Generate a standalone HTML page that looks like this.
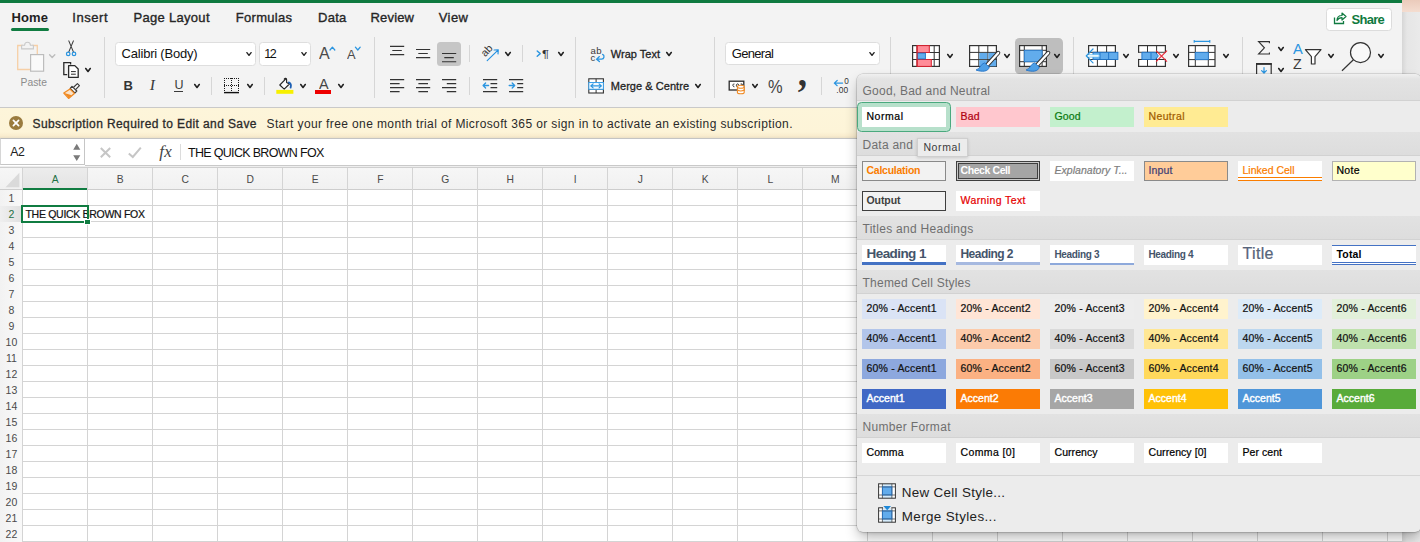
<!DOCTYPE html>
<html lang="en"><head><meta charset="utf-8"><title>Excel</title><style>
html,body{margin:0;padding:0}
body{width:1420px;height:542px;overflow:hidden;position:relative;background:#ececec;font-family:"Liberation Sans",sans-serif}
.r{position:absolute;box-sizing:border-box;display:block}
.t{position:absolute;white-space:pre;display:block}
</style></head>
<body>
<div class="r" style="left:1402px;top:0px;width:18px;height:542px;background:linear-gradient(to right,#d6d6d6 0,#e6e6e6 5px,#eaeaea 100%);"></div>
<div class="r" style="left:1402px;top:0px;width:18px;height:12px;background:linear-gradient(#ebcbbb,#f4ddd0);"></div>
<div class="r" style="left:0px;top:0px;width:1402px;height:107px;background:#f3f3f3;"></div>
<div class="r" style="left:0px;top:0px;width:1402px;height:3px;background:#0f7a40;"></div>
<span class="t" style="left:11.50px;top:8px;font:normal bold 13px/20px 'Liberation Sans',sans-serif;color:#1f1f1f;letter-spacing:0.127px;">Home</span>
<div class="r" style="left:11px;top:28px;width:38px;height:3px;background:#107c41;border-radius:1.5px"></div>
<span class="t" style="left:72.25px;top:8px;font:normal normal 13px/20px 'Liberation Sans',sans-serif;color:#262626;letter-spacing:0.547px;-webkit-text-stroke:0.35px #262626;">Insert</span>
<span class="t" style="left:133.50px;top:8px;font:normal normal 13px/20px 'Liberation Sans',sans-serif;color:#262626;letter-spacing:0.299px;-webkit-text-stroke:0.35px #262626;">Page Layout</span>
<span class="t" style="left:235.75px;top:8px;font:normal normal 13px/20px 'Liberation Sans',sans-serif;color:#262626;letter-spacing:0.296px;-webkit-text-stroke:0.35px #262626;">Formulas</span>
<span class="t" style="left:318.00px;top:8px;font:normal normal 13px/20px 'Liberation Sans',sans-serif;color:#262626;letter-spacing:0.263px;-webkit-text-stroke:0.35px #262626;">Data</span>
<span class="t" style="left:370.50px;top:8px;font:normal normal 13px/20px 'Liberation Sans',sans-serif;color:#262626;letter-spacing:0.175px;-webkit-text-stroke:0.35px #262626;">Review</span>
<span class="t" style="left:438.75px;top:8px;font:normal normal 13px/20px 'Liberation Sans',sans-serif;color:#262626;letter-spacing:0.435px;-webkit-text-stroke:0.35px #262626;">View</span>
<div class="r" style="left:1325.5px;top:7.5px;width:66px;height:23px;background:#fff;border:1px solid #dcdcdc;border-radius:3.5px"></div>
<span class="t" style="left:1351.60px;top:10px;font:normal bold 13px/20px 'Liberation Sans',sans-serif;color:#0f7a40;letter-spacing:-0.733px;">Share</span>
<svg class="r" style="left:1333px;top:11px;" width="14" height="14" viewBox="0 0 14 14"><path d="M1.5 6.5 V12.5 H10.5 V10" fill="none" stroke="#0f7a40" stroke-width="1.3"/><path d="M4 9.5 C4 6 6.5 4.5 9 4.5 V2 L13 5.5 L9 9 V6.6 C7 6.6 5.2 7.3 4 9.5 Z" fill="none" stroke="#0f7a40" stroke-width="1.2" stroke-linejoin="round"/></svg>
<div class="r" style="left:0px;top:107px;width:1402px;height:31px;background:linear-gradient(#fdf5da 0,#fdf4d8 80%,#f9ecce 93%,#ebe0c6 100%);border-top:1px solid #c9c9c9"></div>
<svg class="r" style="left:9px;top:116px;" width="14" height="14" viewBox="0 0 14 14"><circle cx="7" cy="7" r="7" fill="#9a7b3e"/><line x1="4.4" y1="4.4" x2="9.6" y2="9.6" stroke="#fff" stroke-width="1.7" stroke-linecap="round"/><line x1="9.6" y1="4.4" x2="4.4" y2="9.6" stroke="#fff" stroke-width="1.7" stroke-linecap="round"/></svg>
<span class="t" style="left:32.50px;top:114px;font:normal normal 12px/20px 'Liberation Sans',sans-serif;color:#2a2a2a;letter-spacing:0.393px;-webkit-text-stroke:0.3px #2a2a2a;">Subscription Required to Edit and Save</span>
<span class="t" style="left:266.50px;top:114px;font:normal normal 12px/20px 'Liberation Sans',sans-serif;color:#2a2a2a;letter-spacing:0.386px;">Start your free one month trial of Microsoft 365 or sign in to activate an existing subscription.</span>
<div class="r" style="left:0px;top:138px;width:1402px;height:30px;background:#fff;border-top:1px solid #c4c4c4"></div>
<div class="r" style="left:0px;top:138px;width:85px;height:26.5px;background:#fff;border-right:1px solid #c6c6c6;border-bottom:1px solid #c6c6c6;border-left:1px solid #d6d6d6;border-top:1px solid #bdbdbd"></div>
<div class="r" style="left:85px;top:165px;width:1317px;height:1px;background:#c9c9c9;"></div>
<div class="r" style="left:0px;top:166px;width:1402px;height:1px;background:#eee;"></div>
<div class="r" style="left:0px;top:167px;width:1402px;height:1px;background:#cfcfcf;"></div>
<span class="t" style="left:10.30px;top:142px;font:normal normal 12.3px/20px 'Liberation Sans',sans-serif;color:#222;letter-spacing:-0.545px;">A2</span>
<svg class="r" style="left:72px;top:142px;" width="10" height="21" viewBox="0 0 10 21"><path d="M4.75 1.7 L8.3 7.7 H1.2 Z M4.75 19 L8.3 13.3 H1.2 Z" fill="#7a7a7a"/></svg>
<svg class="r" style="left:99px;top:146px;" width="13" height="13" viewBox="0 0 13 13"><path d="M1.8 2 L11.2 11.2 M11.2 2 L1.8 11.2" stroke="#c6c6c6" stroke-width="2" fill="none"/></svg>
<svg class="r" style="left:127px;top:146px;" width="16" height="13" viewBox="0 0 16 13"><path d="M1.8 7.4 L5.8 11 L13.8 1.6" stroke="#c6c6c6" stroke-width="2" fill="none"/></svg>
<span class="t" style="left:159.30px;top:142px;font:italic normal 17px/20px 'Liberation Serif',serif;color:#444;letter-spacing:0.232px;">fx</span>
<div class="r" style="left:180px;top:144px;width:1px;height:16px;background:#dcdcdc;"></div>
<span class="t" style="left:188.00px;top:143px;font:normal normal 12.5px/20px 'Liberation Sans',sans-serif;color:#111;letter-spacing:-0.684px;">THE QUICK BROWN FOX</span>
<div class="r" style="left:0px;top:168px;width:1402px;height:22px;background:linear-gradient(#f6f6f6,#f1f1f1);border-bottom:1px solid #cdcdcd"></div>
<div class="r" style="left:0px;top:190px;width:22px;height:352px;background:linear-gradient(to right,#f2f2f2,#f9f9f9);"></div>
<div class="r" style="left:22px;top:190px;width:1380px;height:352px;background:#fff;"></div>
<div class="r" style="left:22px;top:205px;width:1380px;height:1px;background:#d4d4d4"></div><div class="r" style="left:22px;top:221px;width:1380px;height:1px;background:#d4d4d4"></div><div class="r" style="left:22px;top:237px;width:1380px;height:1px;background:#d4d4d4"></div><div class="r" style="left:22px;top:253px;width:1380px;height:1px;background:#d4d4d4"></div><div class="r" style="left:22px;top:269px;width:1380px;height:1px;background:#d4d4d4"></div><div class="r" style="left:22px;top:285px;width:1380px;height:1px;background:#d4d4d4"></div><div class="r" style="left:22px;top:301px;width:1380px;height:1px;background:#d4d4d4"></div><div class="r" style="left:22px;top:317px;width:1380px;height:1px;background:#d4d4d4"></div><div class="r" style="left:22px;top:333px;width:1380px;height:1px;background:#d4d4d4"></div><div class="r" style="left:22px;top:349px;width:1380px;height:1px;background:#d4d4d4"></div><div class="r" style="left:22px;top:365px;width:1380px;height:1px;background:#d4d4d4"></div><div class="r" style="left:22px;top:381px;width:1380px;height:1px;background:#d4d4d4"></div><div class="r" style="left:22px;top:397px;width:1380px;height:1px;background:#d4d4d4"></div><div class="r" style="left:22px;top:413px;width:1380px;height:1px;background:#d4d4d4"></div><div class="r" style="left:22px;top:429px;width:1380px;height:1px;background:#d4d4d4"></div><div class="r" style="left:22px;top:445px;width:1380px;height:1px;background:#d4d4d4"></div><div class="r" style="left:22px;top:461px;width:1380px;height:1px;background:#d4d4d4"></div><div class="r" style="left:22px;top:477px;width:1380px;height:1px;background:#d4d4d4"></div><div class="r" style="left:22px;top:493px;width:1380px;height:1px;background:#d4d4d4"></div><div class="r" style="left:22px;top:509px;width:1380px;height:1px;background:#d4d4d4"></div><div class="r" style="left:22px;top:525px;width:1380px;height:1px;background:#d4d4d4"></div><div class="r" style="left:22px;top:541px;width:1380px;height:1px;background:#d4d4d4"></div><div class="r" style="left:22px;top:168px;width:1px;height:374px;background:#d4d4d4"></div><div class="r" style="left:87px;top:168px;width:1px;height:374px;background:#d4d4d4"></div><div class="r" style="left:152px;top:168px;width:1px;height:374px;background:#d4d4d4"></div><div class="r" style="left:217px;top:168px;width:1px;height:374px;background:#d4d4d4"></div><div class="r" style="left:282px;top:168px;width:1px;height:374px;background:#d4d4d4"></div><div class="r" style="left:347px;top:168px;width:1px;height:374px;background:#d4d4d4"></div><div class="r" style="left:412px;top:168px;width:1px;height:374px;background:#d4d4d4"></div><div class="r" style="left:477px;top:168px;width:1px;height:374px;background:#d4d4d4"></div><div class="r" style="left:542px;top:168px;width:1px;height:374px;background:#d4d4d4"></div><div class="r" style="left:607px;top:168px;width:1px;height:374px;background:#d4d4d4"></div><div class="r" style="left:672px;top:168px;width:1px;height:374px;background:#d4d4d4"></div><div class="r" style="left:737px;top:168px;width:1px;height:374px;background:#d4d4d4"></div><div class="r" style="left:802px;top:168px;width:1px;height:374px;background:#d4d4d4"></div><div class="r" style="left:867px;top:168px;width:1px;height:374px;background:#d4d4d4"></div><div class="r" style="left:932px;top:168px;width:1px;height:374px;background:#d4d4d4"></div><div class="r" style="left:997px;top:168px;width:1px;height:374px;background:#d4d4d4"></div><div class="r" style="left:1062px;top:168px;width:1px;height:374px;background:#d4d4d4"></div><div class="r" style="left:1127px;top:168px;width:1px;height:374px;background:#d4d4d4"></div><div class="r" style="left:1192px;top:168px;width:1px;height:374px;background:#d4d4d4"></div><div class="r" style="left:1257px;top:168px;width:1px;height:374px;background:#d4d4d4"></div><div class="r" style="left:1322px;top:168px;width:1px;height:374px;background:#d4d4d4"></div><div class="r" style="left:1387px;top:168px;width:1px;height:374px;background:#d4d4d4"></div>
<div class="r" style="left:23px;top:168px;width:64px;height:22px;background:linear-gradient(#ececec,#e4e4e4);border-bottom:2.5px solid #107c41"></div>
<div class="r" style="left:0px;top:206px;width:22px;height:15.5px;background:linear-gradient(to right,#efefef,#e0e0e0);"></div>
<svg class="r" style="left:3px;top:171px;" width="18" height="18" viewBox="0 0 18 18"><path d="M16.4 1.8 V16.2 H2.5 Z" fill="#dadada"/></svg>
<span class="t" style="left:51.86px;top:170px;font:normal normal 10.3px/20px 'Liberation Sans',sans-serif;color:#1e7145;">A</span>
<span class="t" style="left:116.86px;top:170px;font:normal normal 10.3px/20px 'Liberation Sans',sans-serif;color:#4a4a4a;">B</span>
<span class="t" style="left:181.58px;top:170px;font:normal normal 10.3px/20px 'Liberation Sans',sans-serif;color:#4a4a4a;">C</span>
<span class="t" style="left:246.58px;top:170px;font:normal normal 10.3px/20px 'Liberation Sans',sans-serif;color:#4a4a4a;">D</span>
<span class="t" style="left:311.86px;top:170px;font:normal normal 10.3px/20px 'Liberation Sans',sans-serif;color:#4a4a4a;">E</span>
<span class="t" style="left:377.15px;top:170px;font:normal normal 10.3px/20px 'Liberation Sans',sans-serif;color:#4a4a4a;">F</span>
<span class="t" style="left:441.29px;top:170px;font:normal normal 10.3px/20px 'Liberation Sans',sans-serif;color:#4a4a4a;">G</span>
<span class="t" style="left:506.58px;top:170px;font:normal normal 10.3px/20px 'Liberation Sans',sans-serif;color:#4a4a4a;">H</span>
<span class="t" style="left:573.87px;top:170px;font:normal normal 10.3px/20px 'Liberation Sans',sans-serif;color:#4a4a4a;">I</span>
<span class="t" style="left:637.72px;top:170px;font:normal normal 10.3px/20px 'Liberation Sans',sans-serif;color:#4a4a4a;">J</span>
<span class="t" style="left:701.86px;top:170px;font:normal normal 10.3px/20px 'Liberation Sans',sans-serif;color:#4a4a4a;">K</span>
<span class="t" style="left:767.44px;top:170px;font:normal normal 10.3px/20px 'Liberation Sans',sans-serif;color:#4a4a4a;">L</span>
<span class="t" style="left:831.01px;top:170px;font:normal normal 10.3px/20px 'Liberation Sans',sans-serif;color:#4a4a4a;">M</span>
<span class="t" style="left:8.48px;top:188px;font:normal normal 10.5px/20px 'Liberation Sans',sans-serif;color:#4a4a4a;">1</span>
<span class="t" style="left:8.48px;top:204px;font:normal normal 10.5px/20px 'Liberation Sans',sans-serif;color:#1e7145;">2</span>
<span class="t" style="left:8.48px;top:220px;font:normal normal 10.5px/20px 'Liberation Sans',sans-serif;color:#4a4a4a;">3</span>
<span class="t" style="left:8.48px;top:236px;font:normal normal 10.5px/20px 'Liberation Sans',sans-serif;color:#4a4a4a;">4</span>
<span class="t" style="left:8.48px;top:252px;font:normal normal 10.5px/20px 'Liberation Sans',sans-serif;color:#4a4a4a;">5</span>
<span class="t" style="left:8.48px;top:268px;font:normal normal 10.5px/20px 'Liberation Sans',sans-serif;color:#4a4a4a;">6</span>
<span class="t" style="left:8.48px;top:284px;font:normal normal 10.5px/20px 'Liberation Sans',sans-serif;color:#4a4a4a;">7</span>
<span class="t" style="left:8.48px;top:300px;font:normal normal 10.5px/20px 'Liberation Sans',sans-serif;color:#4a4a4a;">8</span>
<span class="t" style="left:8.48px;top:316px;font:normal normal 10.5px/20px 'Liberation Sans',sans-serif;color:#4a4a4a;">9</span>
<span class="t" style="left:5.56px;top:332px;font:normal normal 10.5px/20px 'Liberation Sans',sans-serif;color:#4a4a4a;">10</span>
<span class="t" style="left:5.95px;top:348px;font:normal normal 10.5px/20px 'Liberation Sans',sans-serif;color:#4a4a4a;">11</span>
<span class="t" style="left:5.56px;top:364px;font:normal normal 10.5px/20px 'Liberation Sans',sans-serif;color:#4a4a4a;">12</span>
<span class="t" style="left:5.56px;top:380px;font:normal normal 10.5px/20px 'Liberation Sans',sans-serif;color:#4a4a4a;">13</span>
<span class="t" style="left:5.56px;top:396px;font:normal normal 10.5px/20px 'Liberation Sans',sans-serif;color:#4a4a4a;">14</span>
<span class="t" style="left:5.56px;top:412px;font:normal normal 10.5px/20px 'Liberation Sans',sans-serif;color:#4a4a4a;">15</span>
<span class="t" style="left:5.56px;top:428px;font:normal normal 10.5px/20px 'Liberation Sans',sans-serif;color:#4a4a4a;">16</span>
<span class="t" style="left:5.56px;top:444px;font:normal normal 10.5px/20px 'Liberation Sans',sans-serif;color:#4a4a4a;">17</span>
<span class="t" style="left:5.56px;top:460px;font:normal normal 10.5px/20px 'Liberation Sans',sans-serif;color:#4a4a4a;">18</span>
<span class="t" style="left:5.56px;top:476px;font:normal normal 10.5px/20px 'Liberation Sans',sans-serif;color:#4a4a4a;">19</span>
<span class="t" style="left:5.56px;top:492px;font:normal normal 10.5px/20px 'Liberation Sans',sans-serif;color:#4a4a4a;">20</span>
<span class="t" style="left:5.56px;top:508px;font:normal normal 10.5px/20px 'Liberation Sans',sans-serif;color:#4a4a4a;">21</span>
<span class="t" style="left:5.56px;top:524px;font:normal normal 10.5px/20px 'Liberation Sans',sans-serif;color:#4a4a4a;">22</span>
<span class="t" style="left:25.50px;top:204px;font:normal normal 10.5px/20px 'Liberation Sans',sans-serif;color:#111;letter-spacing:-0.297px;-webkit-text-stroke:0.2px #111;">THE QUICK BROWN FOX</span>
<div class="r" style="left:21.3px;top:204.5px;width:67.4px;height:18.5px;border:2px solid #107c41"></div>
<div class="r" style="left:84.2px;top:218.6px;width:6.4px;height:6.4px;background:#107c41;border:1px solid #fff;"></div>
<div class="r" style="left:104.0px;top:37px;width:1px;height:61.400000000000006px;background:#d6d6d6;"></div>
<div class="r" style="left:373.9px;top:37px;width:1px;height:61.400000000000006px;background:#d6d6d6;"></div>
<div class="r" style="left:575.1px;top:37px;width:1px;height:61.400000000000006px;background:#d6d6d6;"></div>
<div class="r" style="left:714.0px;top:37px;width:1px;height:61.400000000000006px;background:#d6d6d6;"></div>
<div class="r" style="left:889.9px;top:37px;width:1px;height:61.400000000000006px;background:#d6d6d6;"></div>
<div class="r" style="left:1072.5px;top:37px;width:1px;height:61.400000000000006px;background:#d6d6d6;"></div>
<div class="r" style="left:1242.1px;top:37px;width:1px;height:61.400000000000006px;background:#d6d6d6;"></div>
<div class="r" style="left:211.0px;top:77px;width:1px;height:17.700000000000003px;background:#d6d6d6;"></div>
<div class="r" style="left:263.9px;top:77px;width:1px;height:17.700000000000003px;background:#d6d6d6;"></div>
<div class="r" style="left:469.0px;top:77px;width:1px;height:17.700000000000003px;background:#d6d6d6;"></div>
<div class="r" style="left:820.9px;top:77px;width:1px;height:17.700000000000003px;background:#d6d6d6;"></div>
<div class="r" style="left:469.0px;top:45.3px;width:1px;height:17.1px;background:#d6d6d6;"></div>
<div class="r" style="left:521.8px;top:45.3px;width:1px;height:17.1px;background:#d6d6d6;"></div>
<svg class="r" style="left:15px;top:40px;" width="45" height="34" viewBox="0 0 45 34"><path d="M8 5.5 H2.7 V29.5 H15" fill="none" stroke="#f6cfa6" stroke-width="1.3"/><path d="M17 5.5 H22.3 V14" fill="none" stroke="#f6cfa6" stroke-width="1.3"/><path d="M6.6 8.9 V5.2 H9.6 C9.6 1.2 15.4 1.2 15.4 5.2 H18.4 V8.9 Z" fill="#f3f3f3" stroke="#c9c9c9" stroke-width="1.1" stroke-linejoin="round"/><rect x="15.6" y="14.6" width="13" height="16.6" fill="#fafafa" stroke="#bdbdbd" stroke-width="1.2"/><path d="M34.6 14.8 L37.2 17.4 L39.8 14.8" fill="none" stroke="#bdbdbd" stroke-width="1.4" stroke-linecap="round" stroke-linejoin="round"/></svg>
<span class="t" style="left:20.50px;top:73px;font:normal normal 10.3px/20px 'Liberation Sans',sans-serif;color:#8c8c8c;letter-spacing:0.040px;">Paste</span>
<svg class="r" style="left:64px;top:39px;" width="16" height="19" viewBox="0 0 16 19"><path d="M4.8 1.9 L9.4 12.9 M9.4 1.9 L4.8 12.9" stroke="#3a3a3a" stroke-width="1.05" fill="none" stroke-linecap="round"/><circle cx="4.2" cy="14.9" r="1.75" fill="none" stroke="#2b95e0" stroke-width="1.25"/><circle cx="10" cy="14.9" r="1.75" fill="none" stroke="#2b95e0" stroke-width="1.25"/></svg>
<svg class="r" style="left:62px;top:61px;" width="18" height="18" viewBox="0 0 18 18"><path d="M5.2 13.6 H1.8 V1.6 H8.6 V3.6" fill="none" stroke="#2a2a2a" stroke-width="1.3"/><path d="M6.6 4.6 H12.8 L16.2 8 V16.4 H6.6 Z" fill="#fff" stroke="#2a2a2a" stroke-width="1.3" stroke-linejoin="round"/><path d="M9 10.6 H13.8 M9 13.2 H13.8" stroke="#2a2a2a" stroke-width="1"/></svg>
<svg class="r" style="left:83.1px;top:66.39999999999999px;" width="10" height="8" viewBox="0 0 10 8"><path d="M2.75 2.5 L5 5.5 L7.25 2.5" fill="none" stroke="#222" stroke-width="1.6" stroke-linecap="round" stroke-linejoin="round"/></svg>
<svg class="r" style="left:62px;top:82px;" width="19" height="18" viewBox="0 0 19 18"><path d="M11.6 5.2 L15.4 1.6 L17.4 3.6 L13.8 7.4" fill="#fff" stroke="#3a3a3a" stroke-width="1.2" stroke-linejoin="round"/><path d="M8.2 6.4 L10 4.4 L14.8 9 L12.8 11 Z" fill="#fff" stroke="#3a3a3a" stroke-width="1.2" stroke-linejoin="round"/><path d="M8 7 L12.4 11.4 L6.6 16.4 L1.8 11 Z" fill="#fbe3c8" stroke="#f08a24" stroke-width="1.3" stroke-linejoin="round"/><path d="M2.4 11 L6.6 15.8 L9.8 13.2 Z" fill="#f08a24"/></svg>
<div class="r" style="left:115.3px;top:42.4px;width:140.39999999999998px;height:23.199999999999996px;background:#fff;border:1px solid #dedede;border-radius:3.5px"></div>
<span class="t" style="left:121.60px;top:44px;font:normal normal 13px/20px 'Liberation Sans',sans-serif;color:#111;letter-spacing:-0.211px;">Calibri (Body)</span>
<svg class="r" style="left:243.5px;top:50.4px;" width="10" height="8" viewBox="0 0 10 8"><path d="M2.9 2.65 L5 5.35 L7.1 2.65" fill="none" stroke="#222" stroke-width="1.4" stroke-linecap="round" stroke-linejoin="round"/></svg>
<div class="r" style="left:258.5px;top:42.4px;width:52.89999999999998px;height:23.199999999999996px;background:#fff;border:1px solid #dedede;border-radius:3.5px"></div>
<span class="t" style="left:264.30px;top:44px;font:normal normal 12.5px/20px 'Liberation Sans',sans-serif;color:#111;letter-spacing:-1.504px;">12</span>
<svg class="r" style="left:299.3px;top:50.4px;" width="10" height="8" viewBox="0 0 10 8"><path d="M2.9 2.65 L5 5.35 L7.1 2.65" fill="none" stroke="#222" stroke-width="1.4" stroke-linecap="round" stroke-linejoin="round"/></svg>
<span class="t" style="left:319.20px;top:44px;font:normal normal 17px/20px 'Liberation Sans',sans-serif;color:#4a4a4a;letter-spacing:-0.640px;transform:scaleX(0.944);transform-origin:0 0;">A</span>
<svg class="r" style="left:329px;top:45px;" width="7" height="7" viewBox="0 0 7 7"><path d="M1 5 L3.4 2.2 L5.8 5" fill="none" stroke="#2b95e0" stroke-width="1.3" stroke-linecap="round" stroke-linejoin="round"/></svg>
<span class="t" style="left:346.70px;top:45px;font:normal normal 13.3px/20px 'Liberation Sans',sans-serif;color:#4a4a4a;letter-spacing:-0.272px;transform:scaleX(0.969);transform-origin:0 0;">A</span>
<svg class="r" style="left:354px;top:45px;" width="8" height="7" viewBox="0 0 8 7"><path d="M1.4 2.2 L3.8 5 L6.2 2.2" fill="none" stroke="#2b95e0" stroke-width="1.3" stroke-linecap="round" stroke-linejoin="round"/></svg>
<span class="t" style="left:123.50px;top:76px;font:normal bold 13px/20px 'Liberation Sans',sans-serif;color:#333;">B</span>
<span class="t" style="left:150.00px;top:75px;font:italic normal 14.3px/20px 'Liberation Serif',serif;color:#333;-webkit-text-stroke:0.15px #333;">I</span>
<span class="t" style="left:174.60px;top:75px;font:normal normal 12.5px/20px 'Liberation Sans',sans-serif;color:#3a3a3a;">U</span>
<div class="r" style="left:174.1px;top:90.8px;width:8.8px;height:1.1px;background:#3a3a3a;"></div>
<svg class="r" style="left:192.1px;top:82.39999999999999px;" width="10" height="8" viewBox="0 0 10 8"><path d="M2.75 2.5 L5 5.5 L7.25 2.5" fill="none" stroke="#222" stroke-width="1.6" stroke-linecap="round" stroke-linejoin="round"/></svg>
<svg class="r" style="left:223px;top:77px;" width="18" height="18" viewBox="0 0 18 18"><path d="M1 1.5 H16 M1 8.5 H16 M1.5 1 V14 M8.5 1 V14 M15.5 1 V14" stroke="#1a1a1a" stroke-width="1" stroke-dasharray="1 1" fill="none" shape-rendering="crispEdges"/><rect x="1" y="14.9" width="15" height="1.4" fill="#111"/></svg>
<svg class="r" style="left:244.9px;top:82.39999999999999px;" width="10" height="8" viewBox="0 0 10 8"><path d="M2.75 2.5 L5 5.5 L7.25 2.5" fill="none" stroke="#222" stroke-width="1.6" stroke-linecap="round" stroke-linejoin="round"/></svg>
<svg class="r" style="left:276px;top:77px;" width="18" height="18" viewBox="0 0 18 18"><path d="M9.6 2.2 L3.8 8 L8.2 12.2 L13.4 7 L10.6 5.4 V2.6 C10.6 1 9 1 8.2 2" fill="#fafafa" stroke="#222" stroke-width="1.1" stroke-linejoin="round" stroke-linecap="round"/><path d="M12.8 5.4 C14.8 6 15.4 8.2 14.6 10.6" fill="none" stroke="#1c5fb4" stroke-width="1.8" stroke-linecap="round"/><rect x="0.3" y="12.9" width="17.1" height="3.9" fill="#f7f000"/></svg>
<svg class="r" style="left:297.9px;top:82.39999999999999px;" width="10" height="8" viewBox="0 0 10 8"><path d="M2.75 2.5 L5 5.5 L7.25 2.5" fill="none" stroke="#222" stroke-width="1.6" stroke-linecap="round" stroke-linejoin="round"/></svg>
<span class="t" style="left:318.60px;top:74px;font:normal normal 14.7px/20px 'Liberation Sans',sans-serif;color:#444;letter-spacing:-0.205px;transform:scaleX(0.979);transform-origin:0 0;">A</span>
<div class="r" style="left:315px;top:89.9px;width:15.9px;height:3.9px;background:#ee0000;"></div>
<svg class="r" style="left:335.9px;top:82.39999999999999px;" width="10" height="8" viewBox="0 0 10 8"><path d="M2.75 2.5 L5 5.5 L7.25 2.5" fill="none" stroke="#222" stroke-width="1.6" stroke-linecap="round" stroke-linejoin="round"/></svg>
<svg class="r" style="left:389.9px;top:0" width="16" height="100" viewBox="0 0 16 100"><path d="M0 46.4 H14.2 M2.3 50.5 H11.8 M0 54.6 H14.2 " stroke="#333" stroke-width="1.15" fill="none"/></svg>
<svg class="r" style="left:415.9px;top:0" width="16" height="100" viewBox="0 0 16 100"><path d="M0 49.5 H14.2 M2.3 53.5 H11.8 M0 57.6 H14.2 " stroke="#333" stroke-width="1.15" fill="none"/></svg>
<div class="r" style="left:437px;top:42.1px;width:23.9px;height:23.9px;background:#c6c6c6;border-radius:3.5px"></div>
<svg class="r" style="left:441.9px;top:0" width="16" height="100" viewBox="0 0 16 100"><path d="M0 53.5 H14.2 M2.3 57.6 H11.8 M0 61.7 H14.2 " stroke="#333" stroke-width="1.15" fill="none"/></svg>
<svg class="r" style="left:389.9px;top:0" width="16" height="100" viewBox="0 0 16 100"><path d="M0 79.6 H14.2 M0 83.55 H9.6 M0 87.55 H14.2 M0 91.55 H9.6 " stroke="#333" stroke-width="1.15" fill="none"/></svg>
<svg class="r" style="left:415.9px;top:0" width="16" height="100" viewBox="0 0 16 100"><path d="M0 79.6 H14.2 M2.4 83.55 H12 M0 87.55 H14.2 M2.4 91.55 H12 " stroke="#333" stroke-width="1.15" fill="none"/></svg>
<svg class="r" style="left:441.9px;top:0" width="16" height="100" viewBox="0 0 16 100"><path d="M0 79.6 H14.2 M4.8 83.55 H14.2 M0 87.55 H14.2 M4.8 91.55 H14.2 " stroke="#333" stroke-width="1.15" fill="none"/></svg>
<svg class="r" style="left:480px;top:44px;" width="20" height="18" viewBox="0 0 20 18"><text x="0" y="0" transform="translate(5.3 13.3) rotate(-47)" font-family="Liberation Sans,sans-serif" font-size="10.6" fill="#333">ab</text><path d="M7.2 16.7 L18 6.1 M14.1 6 L18.3 5.8 L18 9.9" fill="none" stroke="#2390e0" stroke-width="1.15" stroke-linecap="round" stroke-linejoin="round"/></svg>
<svg class="r" style="left:503px;top:50.4px;" width="10" height="8" viewBox="0 0 10 8"><path d="M2.75 2.5 L5 5.5 L7.25 2.5" fill="none" stroke="#222" stroke-width="1.6" stroke-linecap="round" stroke-linejoin="round"/></svg>
<svg class="r" style="left:536px;top:49px;" width="14" height="10" viewBox="0 0 14 10"><path d="M1.2 2 L4.2 4.6 L1.2 7.2" fill="none" stroke="#2b95e0" stroke-width="1.4" stroke-linecap="round" stroke-linejoin="round"/></svg>
<span class="t" style="left:542.30px;top:45px;font:normal normal 10px/20px 'Liberation Sans',sans-serif;color:#333;transform:scaleX(1.3);transform-origin:0 0;">¶</span>
<svg class="r" style="left:556px;top:50.4px;" width="10" height="8" viewBox="0 0 10 8"><path d="M2.75 2.5 L5 5.5 L7.25 2.5" fill="none" stroke="#222" stroke-width="1.6" stroke-linecap="round" stroke-linejoin="round"/></svg>
<svg class="r" style="left:482.8px;top:0" width="16" height="100" viewBox="0 0 16 100"><path d="M0 79.6 H14.2 M7.5 83.55 H14.2 M7.5 87.55 H14.2 M0 91.55 H14.2 " stroke="#333" stroke-width="1.15" fill="none"/></svg>
<svg class="r" style="left:482px;top:81px;" width="8" height="9" viewBox="0 0 8 9"><path d="M6.6 4.5 H1.2 M3.6 2 L1.1 4.5 L3.6 7" fill="none" stroke="#2b95e0" stroke-width="1.3" stroke-linecap="round" stroke-linejoin="round"/></svg>
<svg class="r" style="left:508.9px;top:0" width="16" height="100" viewBox="0 0 16 100"><path d="M0 79.6 H14.2 M8.2 83.55 H14.2 M8.2 87.55 H14.2 M0 91.55 H14.2 " stroke="#333" stroke-width="1.15" fill="none"/></svg>
<svg class="r" style="left:508.4px;top:81px;" width="8" height="9" viewBox="0 0 8 9"><path d="M1.2 4.5 H6.6 M4.2 2 L6.7 4.5 L4.2 7" fill="none" stroke="#2b95e0" stroke-width="1.3" stroke-linecap="round" stroke-linejoin="round"/></svg>
<svg class="r" style="left:589px;top:45px;" width="17" height="18" viewBox="0 0 17 18"><text x="1.5" y="8.6" font-family="Liberation Sans,sans-serif" font-size="9.6" fill="#3a3a3a" letter-spacing="0.5">ab</text><text x="1.5" y="16.4" font-family="Liberation Sans,sans-serif" font-size="9.6" fill="#3a3a3a">c</text><path d="M13.6 9.4 C15.8 10.4 15.4 14.2 12.6 14.2 H8 M10.4 11.6 L7.6 14.2 L10.4 16.6" fill="none" stroke="#2b95e0" stroke-width="1.3" stroke-linecap="round" stroke-linejoin="round"/></svg>
<span class="t" style="left:610.80px;top:44px;font:normal normal 11px/20px 'Liberation Sans',sans-serif;color:#1f1f1f;letter-spacing:0.023px;-webkit-text-stroke:0.3px #1f1f1f;">Wrap Text</span>
<svg class="r" style="left:664.2px;top:50.4px;" width="10" height="8" viewBox="0 0 10 8"><path d="M2.75 2.5 L5 5.5 L7.25 2.5" fill="none" stroke="#222" stroke-width="1.6" stroke-linecap="round" stroke-linejoin="round"/></svg>
<svg class="r" style="left:587.5px;top:77.5px;" width="17" height="16" viewBox="0 0 17 16"><rect x="0.8" y="0.8" width="14.6" height="14.2" fill="#fff" stroke="#333" stroke-width="1.1"/><path d="M0.8 4.5 H15.4 M0.8 11.3 H15.4 M8.1 0.8 V4.5 M8.1 11.3 V15" stroke="#333" stroke-width="1" fill="none"/><rect x="0.8" y="4.5" width="14.6" height="6.8" fill="#f2f9fe" stroke="#3aa0ea" stroke-width="1"/><path d="M2.9 7.9 H13.3 M5.1 5.9 L2.8 7.9 L5.1 9.9 M11.1 5.9 L13.4 7.9 L11.1 9.9" fill="none" stroke="#2b95e0" stroke-width="1.25" stroke-linecap="round" stroke-linejoin="round"/></svg>
<span class="t" style="left:610.80px;top:76px;font:normal normal 11px/20px 'Liberation Sans',sans-serif;color:#1f1f1f;letter-spacing:0.043px;-webkit-text-stroke:0.3px #1f1f1f;">Merge &amp; Centre</span>
<svg class="r" style="left:693.1px;top:82.39999999999999px;" width="10" height="8" viewBox="0 0 10 8"><path d="M2.75 2.5 L5 5.5 L7.25 2.5" fill="none" stroke="#222" stroke-width="1.6" stroke-linecap="round" stroke-linejoin="round"/></svg>
<div class="r" style="left:725.4px;top:42.3px;width:154.20000000000005px;height:23.10000000000001px;background:#fff;border:1px solid #dedede;border-radius:3.5px"></div>
<span class="t" style="left:731.70px;top:44px;font:normal normal 13px/20px 'Liberation Sans',sans-serif;color:#111;letter-spacing:-0.658px;">General</span>
<svg class="r" style="left:867.3px;top:50.4px;" width="10" height="8" viewBox="0 0 10 8"><path d="M2.9 2.65 L5 5.35 L7.1 2.65" fill="none" stroke="#222" stroke-width="1.4" stroke-linecap="round" stroke-linejoin="round"/></svg>
<svg class="r" style="left:728px;top:80px;" width="19" height="15" viewBox="0 0 19 15"><rect x="1.2" y="1.2" width="14.6" height="8.8" fill="#fff" stroke="#2a2a2a" stroke-width="1.3"/><path d="M6.4 4 C4.6 3.4 4.2 6.8 6.4 6.8 M9.6 3.9 C8 3.9 8 6.9 9.6 6.9 C11.2 6.9 11.2 3.9 9.6 3.9 M12.6 4 H14.2 V6.8" fill="none" stroke="#2a2a2a" stroke-width="1"/><path d="M9.4 6.8 V12.4 C9.4 14.2 16.2 14.2 16.2 12.4 V6.8" fill="#fff" stroke="#f08a24" stroke-width="1.1"/><ellipse cx="12.8" cy="6.8" rx="3.4" ry="1.5" fill="#fff" stroke="#f08a24" stroke-width="1.1"/><path d="M9.4 9.6 C9.4 11.4 16.2 11.4 16.2 9.6" fill="none" stroke="#f08a24" stroke-width="1.1"/></svg>
<svg class="r" style="left:749.9px;top:82.39999999999999px;" width="10" height="8" viewBox="0 0 10 8"><path d="M2.75 2.5 L5 5.5 L7.25 2.5" fill="none" stroke="#222" stroke-width="1.6" stroke-linecap="round" stroke-linejoin="round"/></svg>
<span class="t" style="left:767.60px;top:77px;font:normal normal 19px/20px 'Liberation Sans',sans-serif;color:#444;letter-spacing:-2.294px;transform:scaleX(0.864);transform-origin:0 0;">%</span>
<span class="t" style="left:795.6px;top:83px;font:bold 40px/20px 'Liberation Serif',serif;color:#333;transform:scaleX(0.92);transform-origin:0 0">’</span>
<svg class="r" style="left:833px;top:78px;" width="17" height="16" viewBox="0 0 17 16"><path d="M9.6 5.1 H1.4 M4.2 2.5 L1.3 5.1 L4.2 7.7" fill="none" stroke="#2b95e0" stroke-width="1.2" stroke-linecap="round" stroke-linejoin="round"/><text x="11.3" y="6.3" font-family="Liberation Sans,sans-serif" font-size="8.2" fill="#333">0</text><text x="3.2" y="14.9" font-family="Liberation Sans,sans-serif" font-size="8.4" fill="#333" letter-spacing="0.15">.00</text></svg>
<svg class="r" style="left:912.3px;top:45px;overflow:visible" width="28" height="22" viewBox="0 0 28 22"><rect x="0.6" y="0.6" width="26.8" height="20.8" fill="#fff"/><path d="M5.1 0.6 V21.4 M22.2 0.6 V21.4 M0.6 7.5 H27.4 M0.6 14.5 H27.4 " stroke="#333" stroke-width="1" fill="none"/><rect x="0.6" y="0.6" width="26.8" height="20.8" fill="none" stroke="#333" stroke-width="1.2"/><rect x="5.1" y="0.6" width="12.2" height="6.9" fill="#ff8c98" stroke="#d8202e" stroke-width="1"/><rect x="5.1" y="14.5" width="14.2" height="6.9" fill="#ff8c98" stroke="#d8202e" stroke-width="1"/><rect x="5.6" y="8.1" width="7.8" height="5.8" fill="#62acec" stroke="#1e72c6" stroke-width="0.9"/><path d="M5.1 0.6 V21.4" stroke="#d8202e" stroke-width="1"/></svg>
<svg class="r" style="left:944.9px;top:52.1px;" width="10" height="8" viewBox="0 0 10 8"><path d="M2.75 2.5 L5 5.5 L7.25 2.5" fill="none" stroke="#222" stroke-width="1.6" stroke-linecap="round" stroke-linejoin="round"/></svg>
<svg class="r" style="left:969px;top:45px;overflow:visible" width="28" height="22" viewBox="0 0 28 22"><rect x="0.6" y="0.6" width="26.8" height="20.8" fill="#fff"/><path d="M9.8 0.6 V21.4 M18.8 0.6 V21.4 M0.6 7.4 H27.4 M0.6 14.6 H27.4 " stroke="#333" stroke-width="1" fill="none"/><rect x="0.6" y="0.6" width="26.8" height="20.8" fill="none" stroke="#333" stroke-width="1.2"/><rect x="10.3" y="7.9" width="8" height="6.2" fill="#62acec"/><rect x="19.3" y="7.9" width="8" height="6.2" fill="#62acec"/><rect x="10.3" y="15.1" width="8" height="6.2" fill="#62acec"/><rect x="19.3" y="15.1" width="8" height="6.2" fill="#62acec"/><path d="M29.2 7.9 L18.2 20" stroke="#333" stroke-width="4.2" stroke-linecap="round" fill="none"/><path d="M29.2 7.9 L18 20.2" stroke="#fff" stroke-width="2.3" stroke-linecap="round" fill="none"/><path d="M15.6 17.9 L20.2 22 C19.6 26.6 13 27.2 7 25 C11.8 23.8 11.2 19 15.6 17.9 Z" fill="#4d9fe6" stroke="#2474c8" stroke-width="0.9" stroke-linejoin="round"/></svg>
<svg class="r" style="left:1001.9px;top:52.1px;" width="10" height="8" viewBox="0 0 10 8"><path d="M2.75 2.5 L5 5.5 L7.25 2.5" fill="none" stroke="#222" stroke-width="1.6" stroke-linecap="round" stroke-linejoin="round"/></svg>
<div class="r" style="left:1015.2px;top:37.9px;width:47.8px;height:35.8px;background:#bebebe;border-radius:4.5px"></div>
<svg class="r" style="left:1019px;top:45px;overflow:visible" width="28" height="22" viewBox="0 0 28 22"><rect x="0.6" y="0.6" width="26.8" height="20.8" fill="#fff"/><path d="M5.3 0.6 V21.4 M23.1 0.6 V21.4 M0.6 5.3 H27.4 M0.6 16.7 H27.4 " stroke="#333" stroke-width="1" fill="none"/><rect x="0.6" y="0.6" width="26.8" height="20.8" fill="none" stroke="#333" stroke-width="1.2"/><rect x="5.3" y="5.3" width="17.8" height="11.4" fill="#62acec" stroke="#2b7fd0" stroke-width="0.9"/><path d="M29.2 7.9 L18.2 20" stroke="#333" stroke-width="4.2" stroke-linecap="round" fill="none"/><path d="M29.2 7.9 L18 20.2" stroke="#fff" stroke-width="2.3" stroke-linecap="round" fill="none"/><path d="M15.6 17.9 L20.2 22 C19.6 26.6 13 27.2 7 25 C11.8 23.8 11.2 19 15.6 17.9 Z" fill="#4d9fe6" stroke="#2474c8" stroke-width="0.9" stroke-linejoin="round"/></svg>
<svg class="r" style="left:1052px;top:52.1px;" width="10" height="8" viewBox="0 0 10 8"><path d="M2.75 2.5 L5 5.5 L7.25 2.5" fill="none" stroke="#222" stroke-width="1.6" stroke-linecap="round" stroke-linejoin="round"/></svg>
<svg class="r" style="left:1088px;top:45px;overflow:visible" width="28" height="22" viewBox="0 0 28 22"><rect x="0.6" y="0.6" width="26.8" height="20.8" fill="#fff"/><path d="M9.4 0.6 V21.4 M18.6 0.6 V21.4 M0.6 7.3 H27.4 M0.6 14.5 H27.4 " stroke="#333" stroke-width="1" fill="none"/><rect x="0.6" y="0.6" width="26.8" height="20.8" fill="none" stroke="#333" stroke-width="1.2"/><rect x="5" y="7.3" width="24.9" height="7.2" fill="#62acec" stroke="#1e72c6" stroke-width="0.9"/><path d="M12 7.3 V14.5 M20.6 7.3 V14.5" stroke="#1e72c6" stroke-width="0.9"/><rect x="-1" y="9.7" width="12.3" height="2.4" rx="1.2" fill="#fff" stroke="#6cc0f2" stroke-width="0.8"/><path d="M5 4 L-1.8 10.9 L5 17.8" fill="none" stroke="#2b95e0" stroke-width="1.2" stroke-linejoin="round" stroke-linecap="round"/></svg>
<svg class="r" style="left:1121px;top:52.1px;" width="10" height="8" viewBox="0 0 10 8"><path d="M2.75 2.5 L5 5.5 L7.25 2.5" fill="none" stroke="#222" stroke-width="1.6" stroke-linecap="round" stroke-linejoin="round"/></svg>
<svg class="r" style="left:1138px;top:45px;overflow:visible" width="28" height="22" viewBox="0 0 28 22"><rect x="0.6" y="0.6" width="26.8" height="20.8" fill="#fff"/><path d="M9.5 0.6 V21.4 M18.6 0.6 V21.4 M0.6 7.3 H27.4 M0.6 14.5 H27.4 " stroke="#333" stroke-width="1" fill="none"/><rect x="0.6" y="0.6" width="26.8" height="20.8" fill="none" stroke="#333" stroke-width="1.2"/><rect x="-0.4" y="7.9" width="4.2" height="6" fill="#f3f3f3"/><rect x="20.6" y="7.9" width="8" height="6" fill="#f3f3f3"/><path d="M3.9 7.3 H17.4 L20.4 10.9 L17.4 14.5 H3.9 Z" fill="#62acec" stroke="#1e72c6" stroke-width="0.9"/><path d="M13 7.3 V14.5" stroke="#1e72c6" stroke-width="0.9"/><path d="M18.1 5.7 L29 16.6 M29 5.7 L18.1 16.6" stroke="#ee2b3b" stroke-width="1.15" fill="none"/></svg>
<svg class="r" style="left:1171px;top:52.1px;" width="10" height="8" viewBox="0 0 10 8"><path d="M2.75 2.5 L5 5.5 L7.25 2.5" fill="none" stroke="#222" stroke-width="1.6" stroke-linecap="round" stroke-linejoin="round"/></svg>
<svg class="r" style="left:1188.2px;top:45px;overflow:visible" width="27.6" height="22" viewBox="0 0 27.6 22"><rect x="0.6" y="0.6" width="26.400000000000002" height="20.8" fill="#fff"/><path d="M7.3 0.6 V21.4 M20.3 0.6 V21.4 M0.6 7.4 H27.0 M0.6 14.6 H27.0 " stroke="#333" stroke-width="1" fill="none"/><rect x="0.6" y="0.6" width="26.400000000000002" height="20.8" fill="none" stroke="#333" stroke-width="1.2"/><rect x="7.3" y="7.4" width="13" height="7.2" fill="#62acec" stroke="#2b7fd0" stroke-width="0.9"/><path d="M6.2 -3.6 H21.8 M6.2 -5 V-2.2 M21.8 -5 V-2.2" stroke="#2b95e0" stroke-width="1.1" fill="none"/></svg>
<svg class="r" style="left:1221px;top:52.1px;" width="10" height="8" viewBox="0 0 10 8"><path d="M2.75 2.5 L5 5.5 L7.25 2.5" fill="none" stroke="#222" stroke-width="1.6" stroke-linecap="round" stroke-linejoin="round"/></svg>
<svg class="r" style="left:1257px;top:40px;" width="14" height="16" viewBox="0 0 14 16"><path d="M12.4 3.2 V1.6 H1.6 L7.4 7.8 L1.6 14 H12.4 V12.4" fill="none" stroke="#333" stroke-width="1.15" stroke-linejoin="miter"/></svg>
<svg class="r" style="left:1275.9px;top:44.5px;" width="10" height="8" viewBox="0 0 10 8"><path d="M2.75 2.5 L5 5.5 L7.25 2.5" fill="none" stroke="#222" stroke-width="1.6" stroke-linecap="round" stroke-linejoin="round"/></svg>
<svg class="r" style="left:1255px;top:62px;" width="18" height="12" viewBox="0 0 18 12"><path d="M1.6 12 V2 H16.2 V12" fill="none" stroke="#333" stroke-width="1.2"/><path d="M1 1.9 H16.8" stroke="#2a2a2a" stroke-width="1.7"/><path d="M9 5.6 V11 M6.6 8.6 L9 11 L11.4 8.6" fill="none" stroke="#2b95e0" stroke-width="1.2" stroke-linecap="round" stroke-linejoin="round"/></svg>
<svg class="r" style="left:1276px;top:66.1px;" width="10" height="8" viewBox="0 0 10 8"><path d="M2.75 2.5 L5 5.5 L7.25 2.5" fill="none" stroke="#222" stroke-width="1.6" stroke-linecap="round" stroke-linejoin="round"/></svg>
<span class="t" style="left:1293.00px;top:39px;font:normal normal 15.4px/20px 'Liberation Sans',sans-serif;color:#2b95e0;letter-spacing:-0.472px;transform:scaleX(0.954);transform-origin:0 0;">A</span>
<span class="t" style="left:1293.20px;top:54px;font:normal normal 15px/20px 'Liberation Sans',sans-serif;color:#3a3a3a;letter-spacing:-0.463px;transform:scaleX(0.949);transform-origin:0 0;">Z</span>
<svg class="r" style="left:1304px;top:48px;" width="19" height="18" viewBox="0 0 19 18"><path d="M1.4 1.6 H17 L11 8.6 V16 H7.4 V8.6 Z" fill="#fff" stroke="#333" stroke-width="1.2" stroke-linejoin="round"/></svg>
<svg class="r" style="left:1326px;top:52.1px;" width="10" height="8" viewBox="0 0 10 8"><path d="M2.75 2.5 L5 5.5 L7.25 2.5" fill="none" stroke="#222" stroke-width="1.6" stroke-linecap="round" stroke-linejoin="round"/></svg>
<svg class="r" style="left:1340px;top:40px;" width="34" height="34" viewBox="0 0 34 34"><circle cx="20.5" cy="12.6" r="10" fill="#f9f9f9" stroke="#333" stroke-width="1.2"/><path d="M13.4 19.8 L2 30.8" stroke="#333" stroke-width="1.2"/></svg>
<svg class="r" style="left:1376px;top:52.1px;" width="10" height="8" viewBox="0 0 10 8"><path d="M2.75 2.5 L5 5.5 L7.25 2.5" fill="none" stroke="#222" stroke-width="1.6" stroke-linecap="round" stroke-linejoin="round"/></svg>
<div class="r" style="left:857px;top:74px;width:564.3px;height:457.7px;background:#ececec;border-radius:6px;box-shadow:0 0 0 0.5px rgba(0,0,0,.2),0 7px 14px -2px rgba(0,0,0,.3),0 1px 3px rgba(0,0,0,.12);overflow:hidden">
<div class="r" style="left:0;top:0;width:564.3px;height:27px;background:linear-gradient(#f0f0f0 0,#e3e3e3 5px,#dedede 100%);border-bottom:1px solid #d2d2d2"></div>
<div class="r" style="left:0;top:58px;width:564.3px;height:24px;background:linear-gradient(#e2e2e2,#dddddd);border-bottom:1px solid #d2d2d2"></div>
<div class="r" style="left:0;top:142px;width:564.3px;height:24px;background:linear-gradient(#e2e2e2,#dddddd);border-bottom:1px solid #d2d2d2"></div>
<div class="r" style="left:0;top:196px;width:564.3px;height:24px;background:linear-gradient(#e2e2e2,#dddddd);border-bottom:1px solid #d2d2d2"></div>
<div class="r" style="left:0;top:340px;width:564.3px;height:24px;background:linear-gradient(#e2e2e2,#dddddd);border-bottom:1px solid #d2d2d2"></div>
<div class="r" style="left:0;top:400.5px;width:564.3px;height:1.5px;background:#d6d6d6"></div>
</div>
<span class="t" style="left:862.50px;top:81px;font:normal normal 12px/20px 'Liberation Sans',sans-serif;color:#6f6f6f;letter-spacing:0.237px;">Good, Bad and Neutral</span>
<span class="t" style="left:862.50px;top:135px;font:normal normal 12px/20px 'Liberation Sans',sans-serif;color:#6f6f6f;letter-spacing:0.252px;">Data and Model</span>
<span class="t" style="left:862.50px;top:219px;font:normal normal 12px/20px 'Liberation Sans',sans-serif;color:#6f6f6f;letter-spacing:0.285px;">Titles and Headings</span>
<span class="t" style="left:862.50px;top:273px;font:normal normal 12px/20px 'Liberation Sans',sans-serif;color:#6f6f6f;letter-spacing:0.233px;">Themed Cell Styles</span>
<span class="t" style="left:862.50px;top:417px;font:normal normal 12px/20px 'Liberation Sans',sans-serif;color:#6f6f6f;letter-spacing:0.332px;">Number Format</span>
<div class="r" style="left:857.2px;top:102px;width:93.6px;height:30px;background:#b7e0cb;border:1px solid #4aa97e;border-radius:4.5px"></div>
<div class="r" style="left:862px;top:107px;width:84px;height:20px;background:#fff;"></div>
<span class="t" style="left:866.50px;top:106px;font:normal normal 10.5px/20px 'Liberation Sans',sans-serif;color:#000;letter-spacing:0.532px;-webkit-text-stroke:0.22px #000;">Normal</span>
<div class="r" style="left:956px;top:107px;width:84px;height:20px;background:#ffc7ce;"></div>
<span class="t" style="left:960.50px;top:106px;font:normal normal 10.5px/20px 'Liberation Sans',sans-serif;color:#b00010;letter-spacing:0.158px;-webkit-text-stroke:0.22px #b00010;">Bad</span>
<div class="r" style="left:1050px;top:107px;width:84px;height:20px;background:#c3f0cd;"></div>
<span class="t" style="left:1054.50px;top:106px;font:normal normal 10.5px/20px 'Liberation Sans',sans-serif;color:#0a7a10;letter-spacing:0.105px;-webkit-text-stroke:0.22px #0a7a10;">Good</span>
<div class="r" style="left:1144px;top:107px;width:84px;height:20px;background:#ffeb93;"></div>
<span class="t" style="left:1148.50px;top:106px;font:normal normal 10.5px/20px 'Liberation Sans',sans-serif;color:#a15c00;letter-spacing:0.358px;-webkit-text-stroke:0.22px #a15c00;">Neutral</span>
<div class="r" style="left:862px;top:161px;width:84px;height:20px;background:#f2f2f2;border:1px solid #8a8a8a;"></div>
<span class="t" style="left:866.50px;top:160px;font:normal bold 10.5px/20px 'Liberation Sans',sans-serif;color:#fa7d00;letter-spacing:-0.259px;">Calculation</span>
<div class="r" style="left:956px;top:161px;width:84px;height:20px;background:#a5a5a5;border:1px solid #3f3f3f;box-shadow:inset 0 0 0 1px #c9c9c9,inset 0 0 0 2px #3f3f3f;"></div>
<span class="t" style="left:960.50px;top:160px;font:normal bold 10.5px/20px 'Liberation Sans',sans-serif;color:#fff;letter-spacing:-0.410px;">Check Cell</span>
<div class="r" style="left:1050px;top:161px;width:84px;height:20px;background:#fff;"></div>
<span class="t" style="left:1054.50px;top:160px;font:italic normal 10.5px/20px 'Liberation Sans',sans-serif;color:#7f7f7f;letter-spacing:0.029px;-webkit-text-stroke:0.22px #7f7f7f;">Explanatory T...</span>
<div class="r" style="left:1144px;top:161px;width:84px;height:20px;background:#ffcc99;border:1px solid #8a8a8a;"></div>
<span class="t" style="left:1148.50px;top:160px;font:normal normal 10.5px/20px 'Liberation Sans',sans-serif;color:#3f3f76;letter-spacing:0.162px;-webkit-text-stroke:0.22px #3f3f76;">Input</span>
<div class="r" style="left:1238px;top:161px;width:84px;height:20px;background:#fff;border-bottom:1px solid #fa7d00;box-shadow:inset 0 -2px 0 0 #fff,inset 0 -3px 0 0 #fa7d00;"></div>
<span class="t" style="left:1242.50px;top:160px;font:normal normal 10.5px/20px 'Liberation Sans',sans-serif;color:#fa7d00;letter-spacing:0.005px;-webkit-text-stroke:0.22px #fa7d00;">Linked Cell</span>
<div class="r" style="left:1332px;top:161px;width:84px;height:20px;background:#ffffcc;border:1px solid #b2b2b2;"></div>
<span class="t" style="left:1336.50px;top:160px;font:normal normal 10.5px/20px 'Liberation Sans',sans-serif;color:#000;letter-spacing:0.273px;-webkit-text-stroke:0.22px #000;">Note</span>
<div class="r" style="left:862px;top:191px;width:84px;height:20px;background:#f2f2f2;border:1px solid #3f3f3f;"></div>
<span class="t" style="left:866.50px;top:190px;font:normal bold 10.5px/20px 'Liberation Sans',sans-serif;color:#3f3f3f;letter-spacing:-0.081px;">Output</span>
<div class="r" style="left:956px;top:191px;width:84px;height:20px;background:#fff;"></div>
<span class="t" style="left:960.50px;top:190px;font:normal normal 10.5px/20px 'Liberation Sans',sans-serif;color:#e60000;letter-spacing:0.391px;-webkit-text-stroke:0.22px #e60000;">Warning Text</span>
<div class="r" style="left:862px;top:245px;width:84px;height:20px;background:#fff;border-bottom:3px solid #4472c4;"></div>
<span class="t" style="left:866.50px;top:244px;font:normal bold 13.5px/20px 'Liberation Sans',sans-serif;color:#44546a;letter-spacing:-0.564px;">Heading 1</span>
<div class="r" style="left:956px;top:245px;width:84px;height:20px;background:#fff;border-bottom:3px solid #a6b9e0;"></div>
<span class="t" style="left:960.50px;top:244px;font:normal bold 12px/20px 'Liberation Sans',sans-serif;color:#44546a;letter-spacing:-0.543px;">Heading 2</span>
<div class="r" style="left:1050px;top:245px;width:84px;height:20px;background:#fff;border-bottom:2px solid #8ea9db;"></div>
<span class="t" style="left:1054.50px;top:245px;font:normal bold 10px/20px 'Liberation Sans',sans-serif;color:#44546a;letter-spacing:-0.349px;">Heading 3</span>
<div class="r" style="left:1144px;top:245px;width:84px;height:20px;background:#fff;"></div>
<span class="t" style="left:1148.50px;top:245px;font:normal bold 10px/20px 'Liberation Sans',sans-serif;color:#44546a;letter-spacing:-0.349px;">Heading 4</span>
<div class="r" style="left:1238px;top:245px;width:84px;height:20px;background:#fff;"></div>
<span class="t" style="left:1242.50px;top:244px;font:normal normal 16px/20px 'Liberation Sans',sans-serif;color:#56647a;letter-spacing:0.342px;-webkit-text-stroke:0.22px #56647a;">Title</span>
<div class="r" style="left:1332px;top:245px;width:84px;height:20px;background:#fff;border-top:1px solid #4472c4;border-bottom:1px solid #4472c4;box-shadow:inset 0 -1px 0 0 #fff,inset 0 -2px 0 0 #4472c4;"></div>
<span class="t" style="left:1336.50px;top:244px;font:normal bold 10.5px/20px 'Liberation Sans',sans-serif;color:#000;letter-spacing:0.174px;">Total</span>
<div class="r" style="left:862px;top:299px;width:84px;height:20px;background:#dae3f5;"></div>
<span class="t" style="left:866.50px;top:298px;font:normal normal 10.5px/20px 'Liberation Sans',sans-serif;color:#111;letter-spacing:0.191px;-webkit-text-stroke:0.22px #111;">20% - Accent1</span>
<div class="r" style="left:862px;top:329px;width:84px;height:20px;background:#b2c5ea;"></div>
<span class="t" style="left:866.50px;top:328px;font:normal normal 10.5px/20px 'Liberation Sans',sans-serif;color:#111;letter-spacing:0.191px;-webkit-text-stroke:0.22px #111;">40% - Accent1</span>
<div class="r" style="left:862px;top:359px;width:84px;height:20px;background:#8da8de;"></div>
<span class="t" style="left:866.50px;top:358px;font:normal normal 10.5px/20px 'Liberation Sans',sans-serif;color:#111;letter-spacing:0.191px;-webkit-text-stroke:0.22px #111;">60% - Accent1</span>
<div class="r" style="left:862px;top:389px;width:84px;height:20px;background:#4068c5;"></div>
<span class="t" style="left:866.50px;top:388px;font:normal normal 10.5px/20px 'Liberation Sans',sans-serif;color:#fff;letter-spacing:0.010px;-webkit-text-stroke:0.4px #fff;">Accent1</span>
<div class="r" style="left:956px;top:299px;width:84px;height:20px;background:#ffe5d6;"></div>
<span class="t" style="left:960.50px;top:298px;font:normal normal 10.5px/20px 'Liberation Sans',sans-serif;color:#111;letter-spacing:0.191px;-webkit-text-stroke:0.22px #111;">20% - Accent2</span>
<div class="r" style="left:956px;top:329px;width:84px;height:20px;background:#fccbab;"></div>
<span class="t" style="left:960.50px;top:328px;font:normal normal 10.5px/20px 'Liberation Sans',sans-serif;color:#111;letter-spacing:0.191px;-webkit-text-stroke:0.22px #111;">40% - Accent2</span>
<div class="r" style="left:956px;top:359px;width:84px;height:20px;background:#fbb183;"></div>
<span class="t" style="left:960.50px;top:358px;font:normal normal 10.5px/20px 'Liberation Sans',sans-serif;color:#111;letter-spacing:0.191px;-webkit-text-stroke:0.22px #111;">60% - Accent2</span>
<div class="r" style="left:956px;top:389px;width:84px;height:20px;background:#fb7b05;"></div>
<span class="t" style="left:960.50px;top:388px;font:normal normal 10.5px/20px 'Liberation Sans',sans-serif;color:#fff;letter-spacing:0.010px;-webkit-text-stroke:0.4px #fff;">Accent2</span>
<div class="r" style="left:1050px;top:299px;width:84px;height:20px;background:#ededed;"></div>
<span class="t" style="left:1054.50px;top:298px;font:normal normal 10.5px/20px 'Liberation Sans',sans-serif;color:#111;letter-spacing:0.191px;-webkit-text-stroke:0.22px #111;">20% - Accent3</span>
<div class="r" style="left:1050px;top:329px;width:84px;height:20px;background:#dadada;"></div>
<span class="t" style="left:1054.50px;top:328px;font:normal normal 10.5px/20px 'Liberation Sans',sans-serif;color:#111;letter-spacing:0.191px;-webkit-text-stroke:0.22px #111;">40% - Accent3</span>
<div class="r" style="left:1050px;top:359px;width:84px;height:20px;background:#c8c8c8;"></div>
<span class="t" style="left:1054.50px;top:358px;font:normal normal 10.5px/20px 'Liberation Sans',sans-serif;color:#111;letter-spacing:0.191px;-webkit-text-stroke:0.22px #111;">60% - Accent3</span>
<div class="r" style="left:1050px;top:389px;width:84px;height:20px;background:#a6a6a6;"></div>
<span class="t" style="left:1054.50px;top:388px;font:normal normal 10.5px/20px 'Liberation Sans',sans-serif;color:#fff;letter-spacing:0.010px;-webkit-text-stroke:0.4px #fff;">Accent3</span>
<div class="r" style="left:1144px;top:299px;width:84px;height:20px;background:#fff3cd;"></div>
<span class="t" style="left:1148.50px;top:298px;font:normal normal 10.5px/20px 'Liberation Sans',sans-serif;color:#111;letter-spacing:0.191px;-webkit-text-stroke:0.22px #111;">20% - Accent4</span>
<div class="r" style="left:1144px;top:329px;width:84px;height:20px;background:#ffe795;"></div>
<span class="t" style="left:1148.50px;top:328px;font:normal normal 10.5px/20px 'Liberation Sans',sans-serif;color:#111;letter-spacing:0.191px;-webkit-text-stroke:0.22px #111;">40% - Accent4</span>
<div class="r" style="left:1144px;top:359px;width:84px;height:20px;background:#ffd95c;"></div>
<span class="t" style="left:1148.50px;top:358px;font:normal normal 10.5px/20px 'Liberation Sans',sans-serif;color:#111;letter-spacing:0.191px;-webkit-text-stroke:0.22px #111;">60% - Accent4</span>
<div class="r" style="left:1144px;top:389px;width:84px;height:20px;background:#ffc107;"></div>
<span class="t" style="left:1148.50px;top:388px;font:normal normal 10.5px/20px 'Liberation Sans',sans-serif;color:#fff;letter-spacing:0.010px;-webkit-text-stroke:0.4px #fff;">Accent4</span>
<div class="r" style="left:1238px;top:299px;width:84px;height:20px;background:#ddebf8;"></div>
<span class="t" style="left:1242.50px;top:298px;font:normal normal 10.5px/20px 'Liberation Sans',sans-serif;color:#111;letter-spacing:0.191px;-webkit-text-stroke:0.22px #111;">20% - Accent5</span>
<div class="r" style="left:1238px;top:329px;width:84px;height:20px;background:#bcd7ef;"></div>
<span class="t" style="left:1242.50px;top:328px;font:normal normal 10.5px/20px 'Liberation Sans',sans-serif;color:#111;letter-spacing:0.191px;-webkit-text-stroke:0.22px #111;">40% - Accent5</span>
<div class="r" style="left:1238px;top:359px;width:84px;height:20px;background:#93c0e9;"></div>
<span class="t" style="left:1242.50px;top:358px;font:normal normal 10.5px/20px 'Liberation Sans',sans-serif;color:#111;letter-spacing:0.191px;-webkit-text-stroke:0.22px #111;">60% - Accent5</span>
<div class="r" style="left:1238px;top:389px;width:84px;height:20px;background:#4f96d9;"></div>
<span class="t" style="left:1242.50px;top:388px;font:normal normal 10.5px/20px 'Liberation Sans',sans-serif;color:#fff;letter-spacing:0.010px;-webkit-text-stroke:0.4px #fff;">Accent5</span>
<div class="r" style="left:1332px;top:299px;width:84px;height:20px;background:#e2f0da;"></div>
<span class="t" style="left:1336.50px;top:298px;font:normal normal 10.5px/20px 'Liberation Sans',sans-serif;color:#111;letter-spacing:0.191px;-webkit-text-stroke:0.22px #111;">20% - Accent6</span>
<div class="r" style="left:1332px;top:329px;width:84px;height:20px;background:#bfe1ad;"></div>
<span class="t" style="left:1336.50px;top:328px;font:normal normal 10.5px/20px 'Liberation Sans',sans-serif;color:#111;letter-spacing:0.191px;-webkit-text-stroke:0.22px #111;">40% - Accent6</span>
<div class="r" style="left:1332px;top:359px;width:84px;height:20px;background:#9dd186;"></div>
<span class="t" style="left:1336.50px;top:358px;font:normal normal 10.5px/20px 'Liberation Sans',sans-serif;color:#111;letter-spacing:0.191px;-webkit-text-stroke:0.22px #111;">60% - Accent6</span>
<div class="r" style="left:1332px;top:389px;width:84px;height:20px;background:#58ab3a;"></div>
<span class="t" style="left:1336.50px;top:388px;font:normal normal 10.5px/20px 'Liberation Sans',sans-serif;color:#fff;letter-spacing:0.010px;-webkit-text-stroke:0.4px #fff;">Accent6</span>
<div class="r" style="left:862px;top:443px;width:84px;height:20px;background:#fff;"></div>
<span class="t" style="left:866.50px;top:442px;font:normal normal 10.5px/20px 'Liberation Sans',sans-serif;color:#000;letter-spacing:0.061px;-webkit-text-stroke:0.22px #000;">Comma</span>
<div class="r" style="left:956px;top:443px;width:84px;height:20px;background:#fff;"></div>
<span class="t" style="left:960.50px;top:442px;font:normal normal 10.5px/20px 'Liberation Sans',sans-serif;color:#000;letter-spacing:0.394px;-webkit-text-stroke:0.22px #000;">Comma [0]</span>
<div class="r" style="left:1050px;top:443px;width:84px;height:20px;background:#fff;"></div>
<span class="t" style="left:1054.50px;top:442px;font:normal normal 10.5px/20px 'Liberation Sans',sans-serif;color:#000;letter-spacing:0.058px;-webkit-text-stroke:0.22px #000;">Currency</span>
<div class="r" style="left:1144px;top:443px;width:84px;height:20px;background:#fff;"></div>
<span class="t" style="left:1148.50px;top:442px;font:normal normal 10.5px/20px 'Liberation Sans',sans-serif;color:#000;letter-spacing:0.074px;-webkit-text-stroke:0.22px #000;">Currency [0]</span>
<div class="r" style="left:1238px;top:443px;width:84px;height:20px;background:#fff;"></div>
<span class="t" style="left:1242.50px;top:442px;font:normal normal 10.5px/20px 'Liberation Sans',sans-serif;color:#000;letter-spacing:0.057px;-webkit-text-stroke:0.22px #000;">Per cent</span>
<div class="r" style="left:917px;top:138px;width:51px;height:19px;background:#ececec;border:1px solid #cfcfcf;box-shadow:0 1px 3px rgba(0,0,0,.15)"></div>
<span class="t" style="left:923.40px;top:137px;font:normal normal 10.5px/20px 'Liberation Sans',sans-serif;color:#3a3a3a;letter-spacing:0.632px;">Normal</span>
<span class="t" style="left:901.80px;top:483px;font:normal normal 13.4px/20px 'Liberation Sans',sans-serif;color:#222;letter-spacing:0.313px;">New Cell Style...</span>
<span class="t" style="left:901.80px;top:507px;font:normal normal 13.4px/20px 'Liberation Sans',sans-serif;color:#222;letter-spacing:0.381px;">Merge Styles...</span>
<svg class="r" style="left:878px;top:483px;overflow:visible" width="18" height="16" viewBox="0 0 18 16"><rect x="0.7" y="0.8" width="16.6" height="14.4" fill="#fff"/><rect x="4.4" y="0.8" width="9.5" height="14.4" fill="#d4ebfb"/><rect x="4.4" y="3.9" width="9.5" height="8.1" fill="#62acec"/><path d="M4.4 0.8 V15.2 M13.9 0.8 V15.2 M0.7 3.9 H17.3 M0.7 12 H17.3" stroke="#333" stroke-width="0.7" fill="none"/><rect x="4.4" y="3.9" width="9.5" height="8.1" fill="none" stroke="#2474c8" stroke-width="0.8"/><rect x="0.6" y="0.8" width="16.8" height="14.4" fill="none" stroke="#333" stroke-width="1"/></svg>
<svg class="r" style="left:878px;top:507px;overflow:visible" width="18" height="16" viewBox="0 0 18 16"><rect x="0.7" y="0.8" width="16.6" height="14.4" fill="#fff"/><rect x="4.4" y="0.8" width="9.5" height="14.4" fill="#d4ebfb"/><rect x="4.4" y="3.9" width="9.5" height="8.1" fill="#62acec"/><path d="M4.4 0.8 V15.2 M13.9 0.8 V15.2 M0.7 3.9 H17.3 M0.7 12 H17.3" stroke="#333" stroke-width="0.7" fill="none"/><rect x="4.4" y="3.9" width="9.5" height="8.1" fill="none" stroke="#2474c8" stroke-width="0.8"/><rect x="0.6" y="0.8" width="16.8" height="14.4" fill="none" stroke="#333" stroke-width="1"/><rect x="5" y="-0.2" width="8.3" height="2" fill="#ececec"/><path d="M5.4 -0.9 H13 L9.2 3.3 Z" fill="#1e88d8"/></svg>
</body></html>
